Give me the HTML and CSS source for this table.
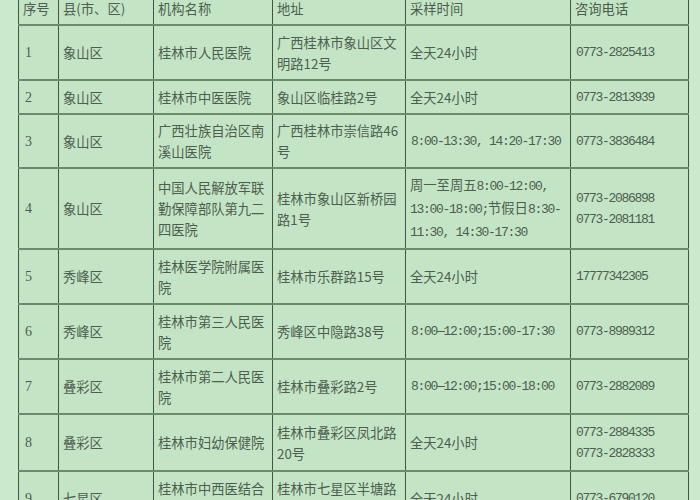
FILE: index.html
```html
<!DOCTYPE html>
<html lang="zh-CN">
<head>
<meta charset="utf-8">
<title>桂林市核酸采样点</title>
<link rel="stylesheet" href="styles.css">
</head>
<body>
<div class="page">
<table class="sites">
  <colgroup>
    <col class="c-no"><col class="c-area"><col class="c-name"><col class="c-addr"><col class="c-time"><col class="c-tel">
  </colgroup>
  <tr class="h-one">
    <td>序号</td><td>县(市、区)</td><td>机构名称</td><td>地址</td><td>采样时间</td><td>咨询电话</td>
  </tr>
  <tr class="h-two">
    <td class="no">1</td><td>象山区</td><td>桂林市人民医院</td><td>广西桂林市象山区文<br>明路12号</td><td>全天24小时</td><td class="mono">0773-2825413</td>
  </tr>
  <tr class="h-one">
    <td class="no">2</td><td>象山区</td><td>桂林市中医医院</td><td>象山区临桂路2号</td><td>全天24小时</td><td class="mono">0773-2813939</td>
  </tr>
  <tr class="h-two-s">
    <td class="no">3</td><td>象山区</td><td>广西壮族自治区南<br>溪山医院</td><td>广西桂林市崇信路46<br>号</td><td class="mono">8:00-13:30, 14:20-17:30</td><td class="mono">0773-3836484</td>
  </tr>
  <tr class="h-three">
    <td class="no">4</td><td>象山区</td><td>中国人民解放军联<br>勤保障部队第九二<br>四医院</td><td>桂林市象山区新桥园<br>路1号</td><td>周一至周五<span class="mono">8:00-12:00,</span><br><span class="mono">13:00-18:00;</span>节假日<span class="mono">8:30-</span><br><span class="mono">11:30, 14:30-17:30</span></td><td class="mono">0773-2086898<br>0773-2081181</td>
  </tr>
  <tr class="h-two">
    <td class="no">5</td><td>秀峰区</td><td>桂林医学院附属医<br>院</td><td>桂林市乐群路15号</td><td>全天24小时</td><td class="mono">17777342305</td>
  </tr>
  <tr class="h-two">
    <td class="no">6</td><td>秀峰区</td><td>桂林市第三人民医<br>院</td><td>秀峰区中隐路38号</td><td class="mono">8:00—12:00;15:00-17:30</td><td class="mono">0773-8989312</td>
  </tr>
  <tr class="h-two">
    <td class="no">7</td><td>叠彩区</td><td>桂林市第二人民医<br>院</td><td>桂林市叠彩路2号</td><td class="mono">8:00—12:00;15:00-18:00</td><td class="mono">0773-2882089</td>
  </tr>
  <tr class="h-two-b">
    <td class="no">8</td><td>叠彩区</td><td>桂林市妇幼保健院</td><td>桂林市叠彩区凤北路<br>20号</td><td>全天24小时</td><td class="mono">0773-2884335<br>0773-2828333</td>
  </tr>
  <tr class="h-two">
    <td class="no">9</td><td>七星区</td><td>桂林市中西医结合<br>医院</td><td>桂林市七星区半塘路<br>8号</td><td>全天24小时</td><td class="mono">0773-6790120</td>
  </tr>
</table>
</div>
</body>
</html>
```
FILE: styles.css
```css
html, body {
  margin: 0;
  padding: 0;
}
body {
  background: #cbe9cc;
  font-family: "Noto Sans CJK SC", "Liberation Sans", sans-serif;
  color: #4d5d4f;
  overflow: hidden;
}
.page {
  width: 700px;
  height: 500px;
  overflow: hidden;
}
.sites {
  border-collapse: collapse;
  table-layout: fixed;
  width: 671px;
  margin: -10px 0 0 18px;
  background: #c4e5c5;
  font-size: 13.3px;
  line-height: 21px;
}
.c-no { width: 40px; }
.c-area { width: 95px; }
.c-name { width: 119px; }
.c-addr { width: 133px; }
.c-time { width: 165px; }
.c-tel { width: 118px; }
.sites td {
  border-left: 1px solid #3e5642;
  border-right: 1px solid #3e5642;
  border-top: 2px solid #6b8a6e;
  border-bottom: 2px solid #6b8a6e;
  padding: 0 4px 0 4px;
  vertical-align: middle;
  white-space: nowrap;
  overflow: hidden;
}
.h-one { height: 34px; }
.h-two { height: 55px; }
.h-two-s { height: 54px; }
.h-two-b { height: 57px; }
.h-three { height: 81px; }
.no {
  font-family: "Liberation Serif", serif;
  font-size: 14px;
  padding-left: 6px !important;
}
.mono {
  font-family: "Liberation Mono", monospace;
  font-size: 13px;
  letter-spacing: -1.3px;
}
td.mono {
  padding-left: 5px;
}
```
